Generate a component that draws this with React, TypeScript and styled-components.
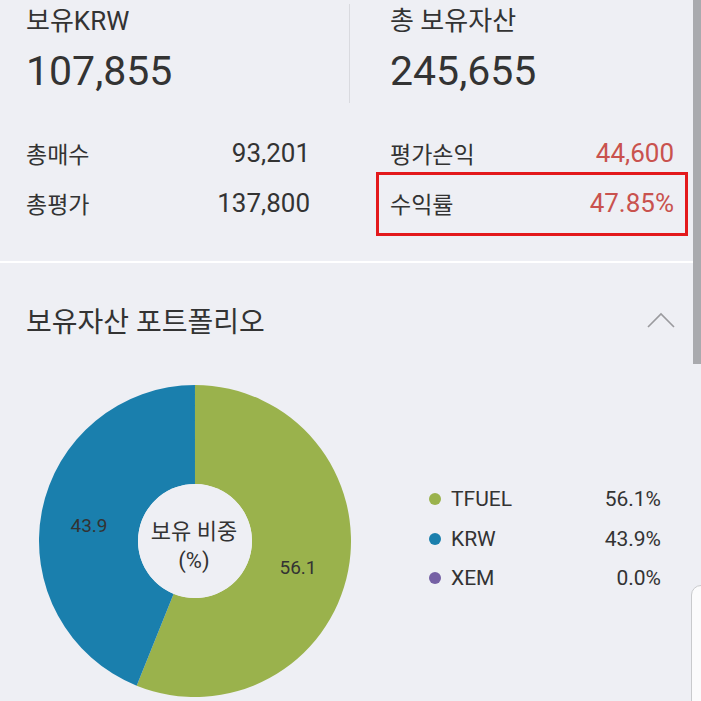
import React from "react";
import styled, { createGlobalStyle } from "styled-components";

const GlobalStyle = createGlobalStyle`
  html, body {
    margin: 0;
    padding: 0;
    background: #eeeff4;
  }
  body {
    font-family: Roboto, "Noto Sans CJK KR", sans-serif;
    color: #333;
    overflow: hidden;
  }
`;

const Page = styled.div`
  position: relative;
  width: 701px;
  height: 701px;
  overflow: hidden;
`;

const Content = styled.div`
  width: 693px;
`;

const Summary = styled.section`
  padding: 4px 0 33px 0;
  border-bottom: 2px solid #ffffff;
`;

const HeaderRow = styled.div`
  display: flex;
`;

const HeadCell = styled.div<{ $first?: boolean }>`
  box-sizing: border-box;
  width: ${(p) => (p.$first ? "350px" : "auto")};
  padding: 0 0 7px ${(p) => (p.$first ? "26px" : "40px")};
  border-right: ${(p) => (p.$first ? "1px solid #d9dadf" : "none")};
`;

const HeadLabel = styled.div`
  margin-top: 2px;
  font-size: 26px;
  line-height: 30px;
  color: #333;
`;

const HeadValue = styled.div`
  margin-top: 10px;
  font-size: 41px;
  line-height: 50px;
  color: #333;
`;

const Stats = styled.div`
  display: grid;
  grid-template-columns: 284px 284px;
  column-gap: 80px;
  padding-left: 26px;
  margin-top: 25px;
`;

const StatCol = styled.div`
  display: flex;
  flex-direction: column;
`;

const StatRow = styled.div<{ $highlight?: boolean }>`
  display: flex;
  justify-content: space-between;
  align-items: center;
  height: 50px;
  ${(p) =>
    p.$highlight &&
    `
    margin: -6px -14px -8px -14px;
    padding: 3px 11px 5px 11px;
    border: 3px solid #e3191c;
  `}
`;

const StatLabel = styled.span`
  font-size: 23px;
  color: #333;
`;

const StatValue = styled.span<{ $up?: boolean }>`
  font-size: 26px;
  color: ${(p) => (p.$up ? "#c9524e" : "#333")};
`;

const Portfolio = styled.section`
  padding: 37px 18px 0 26px;
`;

const TitleRow = styled.div`
  display: flex;
  justify-content: space-between;
  align-items: center;
  height: 40px;
`;

const Title = styled.h2`
  margin: 0;
  font-size: 28px;
  font-weight: 400;
  color: #333;
`;

const ChartRow = styled.div`
  display: flex;
  align-items: center;
  margin-top: 45px;
  padding-left: 13px;
`;

const DonutBox = styled.div`
  flex: none;
  width: 312px;
  height: 312px;
`;

const Legend = styled.ul`
  list-style: none;
  margin: 0 0 5px 78px;
  padding: 0;
  width: 232px;
`;

const LegendItem = styled.li`
  display: flex;
  align-items: center;
  height: 39.5px;
  font-size: 21px;
  color: #333;
`;

const Dot = styled.span<{ $color: string }>`
  flex: none;
  width: 12px;
  height: 12px;
  border-radius: 50%;
  background: ${(p) => p.$color};
  margin-right: 10px;
`;

const LegendName = styled.span`
  flex: 1;
`;

const LegendPct = styled.span`
  text-align: right;
`;

const ScrollThumb = styled.div`
  position: absolute;
  top: 0;
  right: 0;
  width: 8px;
  height: 364px;
  background: #a9aaae;
`;

const FloatTab = styled.div`
  position: absolute;
  left: 691px;
  top: 585px;
  width: 30px;
  height: 160px;
  background: #fbfbfc;
  border: 1px solid #c9cacd;
  border-radius: 10px 0 0 0;
`;

const slices = [
  { name: "TFUEL", pct: 56.1, color: "#9ab24c" },
  { name: "KRW", pct: 43.9, color: "#1a7fad" },
  { name: "XEM", pct: 0.0, color: "#7560a4" },
];

const CX = 156;
const CY = 156;
const R = 156;
const RI = 57;

const pt = (deg: number, r: number) => {
  const a = (deg * Math.PI) / 180;
  return `${(CX + r * Math.sin(a)).toFixed(2)} ${(CY - r * Math.cos(a)).toFixed(2)}`;
};

const arc = (from: number, to: number) => {
  const large = to - from > 180 ? 1 : 0;
  return [
    `M ${pt(from, R)}`,
    `A ${R} ${R} 0 ${large} 1 ${pt(to, R)}`,
    `L ${pt(to, RI)}`,
    `A ${RI} ${RI} 0 ${large} 0 ${pt(from, RI)}`,
    "Z",
  ].join(" ");
};

const Donut = () => {
  let start = 0;
  const parts = slices
    .filter((s) => s.pct > 0)
    .map((s) => {
      const end = Math.min(start + (s.pct / 100) * 360, 359.99);
      const d = arc(start, end);
      start = end;
      return <path key={s.name} d={d} fill={s.color} />;
    });
  const font = 'Roboto, "Noto Sans CJK KR", sans-serif';
  return (
    <svg width="312" height="312" viewBox="0 0 312 312">
      {parts}
      <circle cx={CX} cy={CY} r={RI} fill="#eeeff4" />
      <text x="50" y="147" fontSize="19" fill="#333" textAnchor="middle" fontFamily={font}>
        43.9
      </text>
      <text x="259" y="189" fontSize="19" fill="#333" textAnchor="middle" fontFamily={font}>
        56.1
      </text>
      <text x="155" y="154" fontSize="22" fill="#333" textAnchor="middle" fontFamily={font}>
        보유 비중
      </text>
      <text x="155" y="183" fontSize="22" fill="#333" textAnchor="middle" fontFamily={font}>
        (%)
      </text>
    </svg>
  );
};

const App = () => {
  return (
    <Page>
      <GlobalStyle />
      <Content>
        <Summary>
          <HeaderRow>
            <HeadCell $first>
              <HeadLabel>보유KRW</HeadLabel>
              <HeadValue>107,855</HeadValue>
            </HeadCell>
            <HeadCell>
              <HeadLabel>총 보유자산</HeadLabel>
              <HeadValue>245,655</HeadValue>
            </HeadCell>
          </HeaderRow>
          <Stats>
            <StatCol>
              <StatRow>
                <StatLabel>총매수</StatLabel>
                <StatValue>93,201</StatValue>
              </StatRow>
              <StatRow>
                <StatLabel>총평가</StatLabel>
                <StatValue>137,800</StatValue>
              </StatRow>
            </StatCol>
            <StatCol>
              <StatRow>
                <StatLabel>평가손익</StatLabel>
                <StatValue $up>44,600</StatValue>
              </StatRow>
              <StatRow $highlight>
                <StatLabel>수익률</StatLabel>
                <StatValue $up>47.85%</StatValue>
              </StatRow>
            </StatCol>
          </Stats>
        </Summary>
        <Portfolio>
          <TitleRow>
            <Title>보유자산 포트폴리오</Title>
            <svg width="28" height="16" viewBox="0 0 28 16">
              <polyline points="1,15 14,2 27,15" fill="none" stroke="#9a9a9e" strokeWidth="1.6" />
            </svg>
          </TitleRow>
          <ChartRow>
            <DonutBox>
              <Donut />
            </DonutBox>
            <Legend>
              {slices.map((s) => (
                <LegendItem key={s.name}>
                  <Dot $color={s.color} />
                  <LegendName>{s.name}</LegendName>
                  <LegendPct>{s.pct.toFixed(1)}%</LegendPct>
                </LegendItem>
              ))}
            </Legend>
          </ChartRow>
        </Portfolio>
      </Content>
      <ScrollThumb />
      <FloatTab />
    </Page>
  );
};

export default App;
